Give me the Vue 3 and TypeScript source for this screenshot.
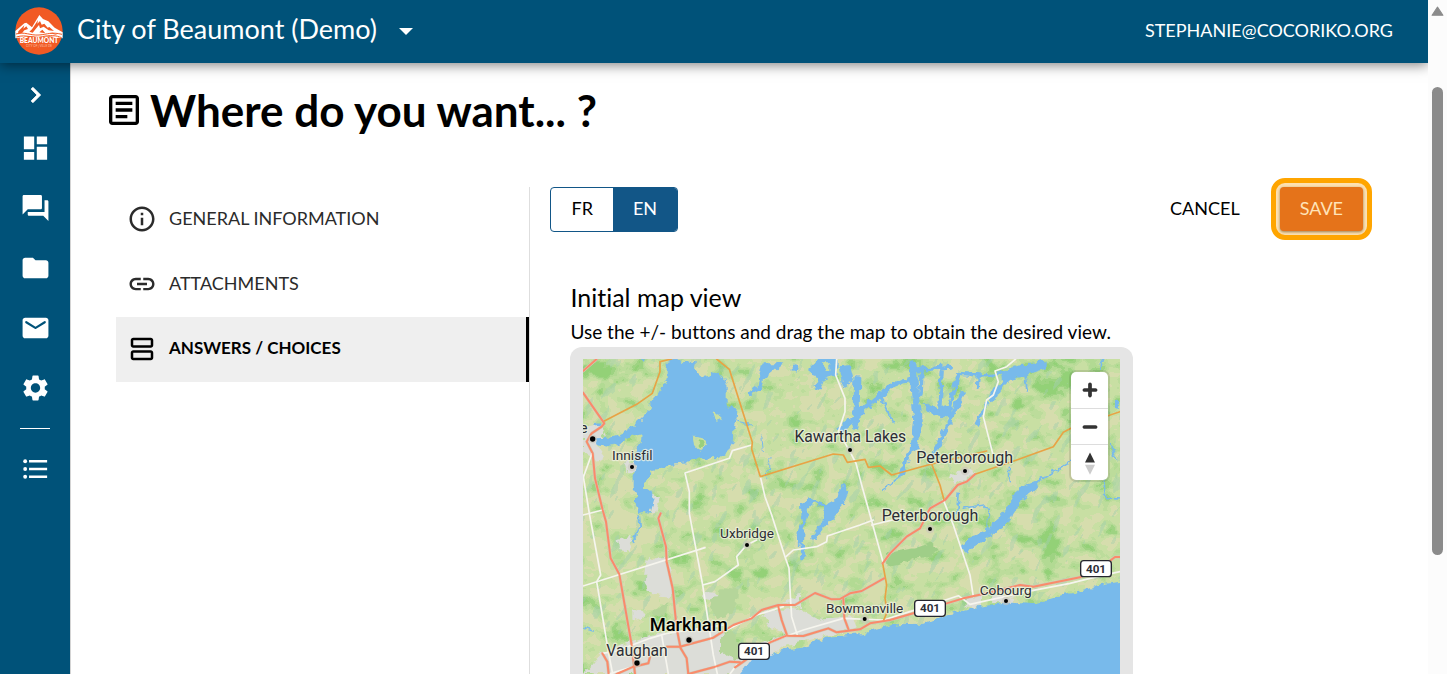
<script setup lang="ts">
import { ref } from 'vue'

interface SideLink { id: string; label: string; path: string }
interface Step { id: string; label: string; path: string }
interface Place { name: string; x: number; y: number; size: number; dotX: number; dotY: number; bold?: boolean }

const sideLinks: SideLink[] = [
  { id: 'dashboard', label: 'Dashboard', path: 'M3 13h8V3H3v10zm0 8h8v-6H3v6zm10 0h8V11h-8v10zm0-18v6h8V3h-8z' },
  { id: 'forum', label: 'Discussions', path: 'M21 6h-2v9H6v2c0 .55.45 1 1 1h11l4 4V7c0-.55-.45-1-1-1zm-4 6V3c0-.55-.45-1-1-1H3c-.55 0-1 .45-1 1v14l4-4h10c.55 0 1-.45 1-1z' },
  { id: 'folder', label: 'Files', path: 'M10 4H4c-1.1 0-1.99.9-1.99 2L2 18c0 1.1.9 2 2 2h16c1.1 0 2-.9 2-2V8c0-1.100-.9-2-2-2h-8l-2-2z' },
  { id: 'mail', label: 'Messages', path: 'M20 4H4c-1.100 0-2 .9-2 2v12c0 1.100.9 2 2 2h16c1.100 0 2-.9 2-2V6c0-1.100-.9-2-2-2zm-.4 4.250-7.070 4.420c-.32.2-.74.2-1.060 0L4.400 8.250a.85.85 0 1 1 .9-1.440L12 11l6.700-4.190a.85.85 0 1 1 .9 1.440z' },
  { id: 'settings', label: 'Settings', path: 'M19.14 12.94c.04-.3.06-.61.06-.94 0-.32-.02-.64-.07-.94l2.030-1.580c.18-.14.23-.41.12-.61l-1.920-3.320c-.12-.22-.37-.29-.59-.22l-2.390.96c-.5-.38-1.030-.7-1.620-.94l-.36-2.540c-.04-.24-.24-.41-.48-.41h-3.840c-.24 0-.43.17-.47.41l-.36 2.540c-.59.24-1.130.57-1.620.94l-2.390-.96c-.22-.08-.47 0-.59.22L2.740 8.870c-.12.21-.08.47.12.61l2.030 1.580c-.05.3-.09.63-.09.94s.02.64.07.94l-2.030 1.580c-.18.14-.23.41-.12.61l1.920 3.320c.12.22.37.29.59.22l2.390-.96c.5.38 1.030.7 1.620.94l.36 2.540c.05.24.24.41.48.41h3.840c.24 0 .44-.17.47-.41l.36-2.540c.59-.24 1.130-.56 1.620-.94l2.390.96c.22.08.47 0 .59-.22l1.920-3.320c.12-.22.07-.47-.12-.61l-2.010-1.580zM12 15.600c-1.980 0-3.600-1.620-3.600-3.600s1.620-3.600 3.600-3.600 3.600 1.620 3.600 3.600-1.620 3.600-3.600 3.600z' },
]

const steps: Step[] = [
  { id: 'general', label: 'GENERAL INFORMATION', path: 'M11 7h2v2h-2zm0 4h2v6h-2zm1-9C6.480 2 2 6.480 2 12s4.480 10 10 10 10-4.480 10-10S17.520 2 12 2zm0 18c-4.410 0-8-3.590-8-8s3.590-8 8-8 8 3.590 8 8-3.590 8-8 8z' },
  { id: 'attachments', label: 'ATTACHMENTS', path: 'M3.900 12c0-1.710 1.390-3.100 3.100-3.100h4V7H7c-2.760 0-5 2.240-5 5s2.240 5 5 5h4v-1.900H7c-1.710 0-3.100-1.390-3.100-3.100zM8 13h8v-2H8v2zm9-6h-4v1.900h4c1.710 0 3.100 1.390 3.100 3.100s-1.390 3.100-3.100 3.100h-4V17h4c2.760 0 5-2.240 5-5s-2.240-5-5-5z' },
  { id: 'answers', label: 'ANSWERS / CHOICES', path: 'M19 13H5c-1.100 0-2 .9-2 2v4c0 1.100.9 2 2 2h14c1.100 0 2-.9 2-2v-4c0-1.100-.9-2-2-2zm0 6H5v-4h14v4zm0-16H5c-1.100 0-2 .9-2 2v4c0 1.100.9 2 2 2h14c1.100 0 2-.9 2-2V5c0-1.100-.9-2-2-2zm0 6H5V5h14v4z' },
]

const places: Place[] = [
  { name: 'e', x: 41, y: 264, size: 44, dotX: 68, dotY: 282 },
  { name: 'Innisfil', x: 187, y: 345, size: 41, dotX: 186, dotY: 366 },
  { name: 'Kawartha Lakes', x: 841, y: 290, size: 47, dotX: 840, dotY: 315 },
  { name: 'Peterborough', x: 1184, y: 354, size: 48, dotX: 1185, dotY: 378 },
  { name: 'Peterborough', x: 1080, y: 528, size: 48, dotX: 1080, dotY: 552 },
  { name: 'Uxbridge', x: 531, y: 580, size: 41, dotX: 531, dotY: 600 },
  { name: 'Bowmanville', x: 884, y: 804, size: 41, dotX: 884, dotY: 822 },
  { name: 'Cobourg', x: 1307, y: 750, size: 41, dotX: 1308, dotY: 768 },
  { name: 'Markham', x: 356, y: 857, size: 55, dotX: 357, dotY: 885, bold: true },
  { name: 'Vaughan', x: 201, y: 933, size: 47, dotX: 201, dotY: 954 },
]

const shields = [
  { x: 1578, y: 671 },
  { x: 1080, y: 790 },
  { x: 552, y: 919 },
]

const whiteRoads = [
  'M39 390 58 505 92 690 80 710 116 925 128 987',
  'M39 400 66 325',
  'M39 510 98 495',
  'M39 723 405 608',
  'M545 300 487 317 478 340 345 384 358 440 358 505 398 720 430 930 442 987',
  'M398 720 435 710 505 660 500 635 530 600 560 585',
  'M571 395 585 455 605 510 645 635 657 670 662 770 665 815 682 870',
  'M648 635 670 615 740 605 770 590 772 573 870 540 910 525',
  'M800 42 797 90 825 160 825 200 805 260 840 320 858 355 875 420 900 510 940 655',
  'M1337 42 1310 65 1275 78 1285 110 1270 150 1250 165 1240 215 1268 325 M1120 465 1150 540 1200 690 1210 755',
  'M97 925 140 918 240 880 290 865 460 840 M116 987 190 965 M275 870 295 987 M480 987 500 960',
  'M460 860 560 810 640 785 M590 895 700 855 820 820 940 825 1050 790 1165 752 1200 778 1370 740 1500 715 1560 700 1650 680',
  'M905 540 1010 515',
]
const orangeRoads = [
  'M305 42 270 50 270 80 247 145 200 178 103 228',
  'M440 42 478 73 547 292 545 312 571 395 790 327 820 330 832 352 885 343 895 367 930 363 965 390 1085 357 1250 318',
  'M1085 357 1110 420 1122 465',
  'M1215 388 1340 345 1450 305 1480 262 1503 250 1650 200',
  'M938 655 950 720 945 760 952 800 940 828',
]
const coralRoads = [
  'M39 78 80 42',
  'M39 143 103 235 95 245 65 265 50 290 68 325 75 400 98 495 108 530 122 640 148 688 185 900 195 987',
  'M272 505 265 520 288 605 290 650 308 730 320 850 332 910 350 940 355 987',
  'M1215 388 1190 410 1163 420 1125 465 1080 490 1050 550 1010 575 960 625 938 655',
  'M290 905 330 905 430 878 490 840 545 820 575 795 625 780 675 780 735 744 785 763 810 762 840 745 875 738 942 700',
  'M140 987 190 965 235 955 240 935 M355 987 430 967 480 950 510 952',
  'M495 967 520 950 600 892 650 872 700 873 775 850 800 862 870 853 900 835 960 825 1030 805 1130 775 1180 760 1250 745 1350 720 1390 725 1530 697 1610 655 1635 636 1650 636',
  'M625 785 635 825 650 868 M820 762 823 820 835 852 M97 925 112 950 116 987',
]

const activeStep = ref('answers')
const language = ref('EN')
</script>

<template>
  <div class="window">
    <div class="app">
      <header class="topbar">
        <svg class="logo" viewBox="0 0 144 144" role="img" aria-label="Beaumont">
          <circle cx="72" cy="72" r="71" fill="#f15a24" />
          <path fill="#fff" d="M1 72 28 49 34 47 51 61 73 24 84 36 100 43 119 62 143 76 143 94 103 88 76 91 45 87 1 94Z" />
          <path fill="#f15a24" d="M10 73 28 55 25 65 34 58 39 66 28 70 22 77 9 82ZM51 67 69 39 67 50 75 42 80 53 88 50 98 62 103 60 117 72 101 70 86 59 75 64 72 54 62 66 53 77 43 74ZM73 76 82 68 91 79ZM103 78 114 77 128 85Z" />
          <path fill="none" stroke="#f15a24" stroke-width="3" d="M3 81c26-8 42 5 69 3s36-10 69-2M4 90c32-10 48 7 78-1 22-5 42-4 58 3" />
          <text x="72" y="109" text-anchor="middle" class="logo-name">BEAUMONT</text>
          <text x="72" y="120" text-anchor="middle" class="logo-tag">CITY OF | VILLE DE</text>
        </svg>
        <button type="button" class="workspace">
          <span>City of Beaumont (Demo)</span>
          <svg viewBox="0 0 32 32" aria-hidden="true"><path d="M9 13h14l-7 7z" /></svg>
        </button>
        <a class="account" href="#account">STEPHANIE@COCORIKO.ORG</a>
      </header>

      <div class="body">
        <nav class="sidebar" aria-label="Main">
          <button type="button" class="expand" aria-label="Expand menu">
            <svg viewBox="0 0 24 24"><path d="M10 6 8.590 7.410 13.170 12l-4.580 4.590L10 18l6-6z" stroke="#fff" stroke-width=".6" /></svg>
          </button>
          <a v-for="link in sideLinks" :key="link.id" :href="'#' + link.id" :aria-label="link.label">
            <svg viewBox="0 0 24 24"><path :d="link.path" fill-rule="evenodd" /></svg>
          </a>
          <hr />
          <a href="#list" aria-label="List">
            <svg viewBox="0 0 24 24">
              <path d="M7 5h14v2H7zm0 6h14v2H7zm0 6h14v2H7z" />
              <circle cx="4" cy="6" r="1.500" /><circle cx="4" cy="12" r="1.500" /><circle cx="4" cy="18" r="1.500" />
            </svg>
          </a>
        </nav>

        <main>
          <h1>
            <svg viewBox="0 0 24 24" aria-hidden="true">
              <path d="M19 5v14H5V5h14m0-2H5c-1.100 0-2 .9-2 2v14c0 1.100.9 2 2 2h14c1.100 0 2-.9 2-2V5c0-1.100-.9-2-2-2zm-5 14H7v-2h7v2zm3-4H7v-2h10v2zm0-4H7V7h10v2z" />
            </svg>
            <span>Where do you want... ?</span>
          </h1>

          <div class="columns">
            <nav class="steps" aria-label="Sections">
              <a
                v-for="step in steps"
                :key="step.id"
                :href="'#' + step.id"
                :class="{ active: step.id === activeStep }"
                @click.prevent="activeStep = step.id"
              >
                <svg viewBox="0 0 24 24" aria-hidden="true"><path :d="step.path" /></svg>
                <span>{{ step.label }}</span>
              </a>
            </nav>

            <section class="editor">
              <div class="toolbar">
                <div class="languages">
                  <button
                    v-for="code in ['FR', 'EN']"
                    :key="code"
                    type="button"
                    :class="{ selected: code === language }"
                    @click="language = code"
                  >{{ code }}</button>
                </div>
                <div class="actions">
                  <button type="button" class="cancel">CANCEL</button>
                  <div class="highlight"><button type="button" class="save">SAVE</button></div>
                </div>
              </div>

              <div class="field">
                <h2>Initial map view</h2>
                <p>Use the +/- buttons and drag the map to obtain the desired view.</p>
                <div class="frame">
                  <div class="map">
                    <svg class="canvas" viewBox="39 42 1611 1200" preserveAspectRatio="xMidYMin slice">
                      <defs>
                        <radialGradient id="more">
                          <stop offset="0" stop-color="#b4b4b4" stop-opacity="1" />
                          <stop offset="1" stop-color="#808080" stop-opacity="0" />
                        </radialGradient>
                        <radialGradient id="less">
                          <stop offset="0" stop-color="#6c6c6c" stop-opacity=".9" />
                          <stop offset="1" stop-color="#7c7c7c" stop-opacity="0" />
                        </radialGradient>
                        <filter id="land" x="0" y="0" width="1" height="1" color-interpolation-filters="sRGB">
                          <feTurbulence type="fractalNoise" baseFrequency=".017 .02" numOctaves="3" seed="11" />
                          <feColorMatrix values=".7 0 0 0 .15  .7 0 0 0 .15  .7 0 0 0 .15  0 0 0 0 1" result="noise" />
                          <feComposite in="noise" in2="SourceGraphic" operator="arithmetic" k2="1" k3="1" k4="-.5" />
                          <feColorMatrix values="1 0 0 0 0  0 1 0 0 0  0 0 1 0 0  0 0 0 0 1" />
                          <feComponentTransfer>
                            <feFuncR type="discrete" tableValues=".84 .84 .84 .84 .84 .84 .84 .84 .84 .785 .785 .74 .7 .62 .58 .58 .58 .58 .58 .58" />
                            <feFuncG type="discrete" tableValues=".87 .87 .87 .87 .87 .87 .87 .87 .87 .875 .875 .865 .855 .83 .82 .82 .82 .82 .82 .82" />
                            <feFuncB type="discrete" tableValues=".68 .68 .68 .68 .68 .68 .68 .68 .68 .64 .64 .61 .58 .51 .47 .47 .47 .47 .47 .47" />
                          </feComponentTransfer>
                        </filter>
                        <filter id="wetland" x="0" y="0" width="1" height="1" color-interpolation-filters="sRGB">
                          <feTurbulence type="fractalNoise" baseFrequency=".015 .045" numOctaves="2" seed="21" />
                          <feColorMatrix values="0 0 0 0 .64  0 0 0 0 .81  0 0 0 0 .67  1 0 0 0 0" />
                          <feComponentTransfer>
                            <feFuncA type="discrete" tableValues="0 0 0 0 0 0 0 0 0 0 0 0 0 .4 .5 .5 .5 .5 .5 .5" />
                          </feComponentTransfer>
                        </filter>
                        <filter id="shore" x="-.05" y="-.05" width="1.100" height="1.100">
                          <feTurbulence type="fractalNoise" baseFrequency=".05" numOctaves="2" seed="3" />
                          <feDisplacementMap in="SourceGraphic" scale="24" xChannelSelector="R" yChannelSelector="G" />
                        </filter>
                      </defs>

                      <g filter="url(#land)">
                        <rect x="39" y="42" width="1611" height="1200" fill="#808080" />
                        <ellipse cx="1460" cy="100" rx="320" ry="200" fill="url(#more)" />
                        <ellipse cx="1010" cy="50" rx="150" ry="60" fill="url(#more)" />
                        <ellipse cx="110" cy="80" rx="150" ry="80" fill="url(#more)" />
                        <ellipse cx="1440" cy="590" rx="210" ry="80" fill="url(#more)" />
                        <ellipse cx="560" cy="690" rx="110" ry="60" fill="url(#more)" />
                        <ellipse cx="350" cy="640" rx="80" ry="80" fill="url(#more)" />
                        <ellipse cx="130" cy="520" rx="190" ry="330" fill="url(#less)" />
                        <ellipse cx="700" cy="200" rx="280" ry="150" fill="url(#less)" />
                        <ellipse cx="1130" cy="280" rx="200" ry="110" fill="url(#less)" />
                        <ellipse cx="780" cy="720" rx="300" ry="70" fill="url(#less)" />
                      </g>
                      <g transform="rotate(-62 850 500)">
                        <rect x="200" y="-500" width="1300" height="1900" filter="url(#wetland)" />
                      </g>

                      <g filter="url(#shore)">
                        <g fill="#dcddd8">
                          <path d="M39 250 90 240 105 270 80 300 105 335 80 350 60 330 39 320ZM140 585 185 575 180 620 145 615ZM230 640 285 640 285 590 310 720 305 760 240 750 225 700ZM190 790 220 800 215 830 190 815ZM165 350 200 350 210 385 175 385ZM250 440 270 460 258 505 240 505Z" />
                          <path d="M100 920 240 870 400 850 460 860 500 920 560 900 640 870 760 820 850 815 860 850 640 905 520 987 39 987ZM575 800 680 790 760 830 660 870 600 850ZM640 770 690 750 690 790ZM1135 395 1190 365 1215 385 1160 420ZM1190 760 1230 755 1230 785 1190 785ZM1270 750 1330 755 1320 775 1270 770ZM400 740 450 745 430 770 400 765Z" />
                        </g>
                        <path fill="#b5d59a" d="M420 770 455 730 505 735 500 775 485 810 440 820ZM450 880 480 855 510 900 505 945 450 920ZM250 795 295 775 290 810 255 815Z" />
                        <path fill="#9fce88" d="M945 625 1035 610 1080 595 1105 610 1085 635 1040 640 990 660 950 665Z" />
                      </g>

                      <g filter="url(#shore)" fill="#78baeb" stroke="none">
                        <path d="M290 50 320 42 340 55 350 48 375 52 370 70 400 95 415 92 425 84 445 88 462 102 470 120 470 180 490 190 503 190 500 215 490 255 488 290 470 325 440 340 425 332 415 345 385 340 350 355 300 360 270 372 245 375 235 400 225 410 222 425 250 445 250 465 238 505 222 498 205 505 198 480 198 445 188 430 188 390 200 370 192 350 200 330 200 310 210 290 212 268 180 275 150 297 115 302 75 298 78 280 115 278 150 268 190 245 220 215 235 200 240 180 260 155 275 130 290 95Z" />
                        <path d="M718 68 745 42 800 42 800 90 765 100 750 135 730 130 745 100 720 90ZM805 64 840 60 852 105 820 128 810 90ZM578 55 640 55 608 82 580 105 570 95ZM665 55 685 60 680 80 665 75ZM70 235 90 232 92 243 75 244ZM200 40 225 40 218 50Z" />
                        <path d="M1425 392 1395 432 1355 465 1320 520 1295 552 1250 580 1185 625 1175 605 1195 580 1240 562 1290 520 1320 470 1345 430 1390 412Z" />
                        <path d="M693 475 722 458 752 470 768 480 795 465 822 412 835 440 812 495 790 525 758 552 735 588 720 582 745 548 768 510 758 488 735 472 715 490 705 530 702 595 684 605 680 570 695 530Z" />
                        <path d="M1630 165 1650 168 1650 192 1632 188ZM1060 170 1100 190 1150 175 1140 215 1085 210ZM1290 80 1350 60 1430 50 1430 70 1370 90 1320 105 1290 135 1270 175 1255 165 1272 130 1300 105Z" />
                      </g>
                      <g filter="url(#shore)" class="rivers">
                        <path stroke-width="23" d="M1028 60 1038 180 1044 230 1034 300" />
                        <path stroke-width="12" d="M1034 300 1010 340 996 385 M1020 100 960 125 M1020 78 1140 65" />
                        <path stroke-width="18" d="M960 125 930 152 880 192 850 225 815 252 M857 245 860 190 862 100" />
                        <path stroke-width="13" d="M1115 80 1108 190 1120 210 M1165 90 1150 150 1130 210 M1178 145 1150 200 1130 250 1100 310 1082 335 M1055 65 1052 150" />
                        <path stroke-width="10" d="M1165 85 1230 90 1310 85 M1225 90 1222 130 M1250 175 1220 235 M575 95 570 130 540 145 M697 600 698 638" />
                        <path stroke-width="5" d="M935 152 950 195 970 230 M1365 90 1372 135 M1420 400 1500 350 1515 340 M1625 295 1635 340 M1605 400 1608 460 1650 462 M1587 70 1598 42 M205 510 208 550 188 595 M39 850 70 858 M1165 440 1160 505 M1180 490 1240 480 1255 500 1250 560 M995 390 960 420 935 435 M1315 370 1318 410" />
                        <path stroke-width="3" d="M500 232 545 240 M575 270 580 320 M600 340 590 400" />
                      </g>
                      <g filter="url(#shore)">
                        <path fill="#78baeb" d="M510 987 545 945 600 930 650 912 700 908 740 888 770 875 840 870 880 867 900 855 940 845 980 838 1060 836 1100 820 1140 805 1200 790 1260 780 1320 770 1400 775 1440 762 1480 750 1530 740 1600 718 1680 705 1680 1250 480 1250Z" />
                        <path fill="#c8dfa3" d="M425 207 440 205 455 215 445 232 430 218ZM372 278 397 282 412 300 392 320 375 300ZM762 58 778 58 778 78 764 78Z" />
                        <path fill="#99d07d" d="M382 286 398 289 403 302 390 310Z" />
                      </g>

                      <g class="road casing"><path v-for="d in coralRoads" :key="d" :d="d" /></g>
                      <g class="road minor"><path v-for="d in whiteRoads" :key="d" :d="d" /></g>
                      <g class="road trunk"><path v-for="d in orangeRoads" :key="d" :d="d" /></g>
                      <g class="road motorway"><path v-for="d in coralRoads" :key="d" :d="d" /></g>

                      <g v-for="(p, i) in places" :key="i">
                        <circle class="halo" :cx="p.dotX" :cy="p.dotY" r="13" />
                        <circle :cx="p.dotX" :cy="p.dotY" :r="p.bold || i === 0 || p.name === 'Vaughan' ? 8 : 6" />
                        <text class="place" :class="{ city: p.bold }" :x="p.x" :y="p.y" :font-size="p.size">{{ p.name }}</text>
                      </g>
                      <g v-for="s in shields" :key="s.x">
                        <rect class="shield" :x="s.x - 46" :y="s.y - 24" width="92" height="48" rx="9" />
                        <text class="route" :x="s.x" :y="s.y + 12">401</text>
                      </g>
                    </svg>

                    <div class="controls">
                      <button type="button" aria-label="Zoom in">
                        <svg viewBox="0 0 29 29"><path d="M14.500 8.500c-.75 0-1.500.75-1.500 1.500v3h-3c-.75 0-1.500.75-1.500 1.500S9.250 16 10 16h3v3c0 .75.75 1.500 1.500 1.500S16 19.750 16 19v-3h3c.75 0 1.500-.75 1.500-1.500S19.750 13 19 13h-3v-3c0-.75-.75-1.500-1.500-1.500z" /></svg>
                      </button>
                      <button type="button" aria-label="Zoom out">
                        <svg viewBox="0 0 29 29"><path d="M10 13c-.75 0-1.500.75-1.500 1.500S9.250 16 10 16h9c.75 0 1.500-.75 1.500-1.500S19.750 13 19 13h-9z" /></svg>
                      </button>
                      <button type="button" aria-label="Reset bearing to north">
                        <svg viewBox="0 0 29 29"><path d="m10.500 14 4-8 4 8h-8z" /><path d="m10.500 16 4 8 4-8h-8z" fill="#ccc" /></svg>
                      </button>
                    </div>
                  </div>
                </div>
              </div>
            </section>
          </div>
        </main>
      </div>
    </div>

    <div class="scrollbar" aria-hidden="true">
      <svg viewBox="0 0 12 10"><path d="M6 1 11 8.500H1z" /></svg>
      <div class="thumb"></div>
    </div>
  </div>
</template>

<style>
body {
  margin: 0;
  overflow: hidden;
}
</style>

<style scoped>
.window {
  display: flex;
  height: 100vh;
  overflow: hidden;
  background: #fff;
  color: #000;
  font-family: Lato, "Open Sans", sans-serif;
  font-variant-ligatures: none;
}
button {
  margin: 0;
  padding: 0;
  border: 0;
  background: none;
  color: inherit;
  font: inherit;
  font-variant-ligatures: none;
  cursor: pointer;
}
a {
  color: inherit;
  text-decoration: none;
}
svg {
  display: block;
  flex: none;
}
.app {
  flex: 1;
  min-width: 0;
  display: flex;
  flex-direction: column;
  overflow: hidden;
}
.topbar {
  position: relative;
  z-index: 1;
  flex: none;
  display: flex;
  align-items: center;
  height: 63px;
  padding: 0 35px 2px 15px;
  box-sizing: border-box;
  background: #005279;
  color: #fff;
  box-shadow: 0 2px 12px rgba(0, 0, 0, 0.5);
}
.logo {
  width: 48px;
  height: 48px;
}
.logo-name {
  fill: #fff;
  font-size: 20px;
  font-weight: 900;
}
.logo-tag {
  fill: #fbc3ad;
  font-size: 9px;
}
.workspace {
  display: flex;
  align-items: center;
  gap: 13px;
  margin-left: 14px;
  padding-bottom: 4px;
  font-size: 27px;
  line-height: 36px;
}
.workspace svg {
  width: 32px;
  height: 32px;
  margin-top: 4px;
  fill: #fff;
}
.account {
  margin-left: auto;
  padding-bottom: 2px;
  font-size: 18px;
}
.body {
  flex: 1;
  display: flex;
  min-height: 0;
}
.sidebar {
  flex: none;
  display: flex;
  flex-direction: column;
  align-items: center;
  width: 70px;
  padding-top: 16px;
  box-sizing: border-box;
  background: #005279;
}
.sidebar svg {
  width: 31px;
  height: 32px;
  fill: #fff;
}
.expand {
  margin-bottom: 7px;
}
.sidebar a {
  display: flex;
  align-items: center;
  height: 60px;
}
.sidebar hr {
  width: 30px;
  height: 1px;
  margin: 10px 0;
  border: 0;
  background: #fff;
}
main {
  flex: 1;
  min-width: 0;
  padding: 0 56px 0 45px;
  border-left: 1px solid #d4d4d4;
}
h1 {
  display: flex;
  align-items: center;
  gap: 6px;
  margin: 19px 0 40px -12px;
  font-size: 44px;
  font-weight: 700;
  line-height: 56px;
}
h1 svg {
  width: 40px;
  height: 40px;
}
.columns {
  display: flex;
}
.steps {
  flex: 0 0 33%;
  box-sizing: border-box;
  min-height: 560px;
  margin-top: 9px;
  border-right: 1px solid #dedede;
}
.steps a {
  display: flex;
  align-items: center;
  gap: 12px;
  height: 65px;
  padding: 0 0 2px 11px;
  box-sizing: border-box;
  font-size: 18px;
  color: #2b2b2b;
}
.steps span {
  padding-bottom: 2px;
}
.steps svg {
  width: 30px;
  height: 30px;
  fill: currentColor;
}
.steps a.active {
  background: #efefef;
  border-right: 3px solid #000;
  color: #000;
  font-size: 17px;
  font-weight: 700;
}
.editor {
  flex: 1;
  min-width: 0;
  padding-left: 20px;
}
.toolbar {
  display: flex;
  align-items: center;
  justify-content: space-between;
  font-size: 18px;
}
.languages {
  display: flex;
  border: 1px solid #125687;
  border-radius: 4px;
  overflow: hidden;
}
.languages button {
  height: 43px;
  padding: 0 20px 2px;
}
.languages .selected {
  background: #125687;
  color: #fff;
}
.actions {
  display: flex;
  align-items: center;
  gap: 31px;
}
.cancel {
  padding-bottom: 2px;
}
.highlight {
  padding: 4px;
  border: 5px solid #ffa500;
  border-radius: 14px;
  background: #fde1b2;
}
.save {
  display: block;
  height: 44px;
  padding: 0 20px 2px;
  border-radius: 4px;
  background: #e5731a;
  color: #ffe3b8;
  box-shadow: 0 1px 3px rgba(90, 60, 10, 0.6);
}
.field {
  padding: 38px 20px 0;
}
h2 {
  margin: 0;
  font-size: 25px;
  font-weight: 400;
  line-height: 38px;
}
p {
  margin: 0;
  font-size: 19px;
  line-height: 31px;
}
.frame {
  max-width: 537px;
  padding: 12px 13px;
  border-radius: 12px;
  background: #e5e5e5;
}
.map {
  position: relative;
}
.canvas {
  width: 100%;
  height: 400px;
  background: #c8dfa3;
}
.rivers {
  fill: none;
  stroke: #78baeb;
  stroke-linecap: round;
  stroke-linejoin: round;
}
.road {
  fill: none;
  stroke-linejoin: round;
  stroke-linecap: round;
}
.casing {
  stroke: #cfc9bb;
  stroke-width: 9;
}
.minor {
  stroke: #f6f5ee;
  stroke-width: 5;
}
.trunk {
  stroke: #e8a345;
  stroke-width: 5;
}
.motorway {
  stroke: #fa8b6a;
  stroke-width: 6;
}
.halo {
  fill: #c9c6bd;
  fill-opacity: 0.6;
}
.place {
  font-family: Roboto, sans-serif;
  text-anchor: middle;
  fill: #2d2d35;
  stroke: rgba(240, 243, 225, 0.75);
  stroke-width: 7;
  stroke-linejoin: round;
  paint-order: stroke;
}
.city {
  font-weight: 500;
  fill: #000;
}
.shield {
  fill: #fff;
  stroke: #25252f;
  stroke-width: 4;
}
.route {
  font-family: Roboto, sans-serif;
  font-size: 35px;
  font-weight: 700;
  text-anchor: middle;
  fill: #2d2d38;
}
.controls {
  position: absolute;
  top: 13px;
  right: 12px;
  width: 37px;
  border-radius: 5px;
  background: #fff;
  box-shadow: 0 0 0 2px rgba(0, 0, 0, 0.1);
}
.controls button {
  display: flex;
  align-items: center;
  justify-content: center;
  width: 100%;
  height: 36px;
}
.controls button + button {
  border-top: 1px solid #ddd;
}
.controls svg {
  width: 36px;
  height: 36px;
  fill: #333;
}
.scrollbar {
  flex: none;
  display: flex;
  flex-direction: column;
  align-items: center;
  width: 19px;
  background: #fcfcfc;
}
.scrollbar svg {
  width: 13px;
  height: 11px;
  margin: 6px 0 70px;
  fill: #8b8b8b;
  stroke: #8b8b8b;
  stroke-linejoin: round;
}
.thumb {
  width: 11px;
  height: 69.5%;
  border-radius: 6px;
  background: #8b8b8b;
}
</style>
